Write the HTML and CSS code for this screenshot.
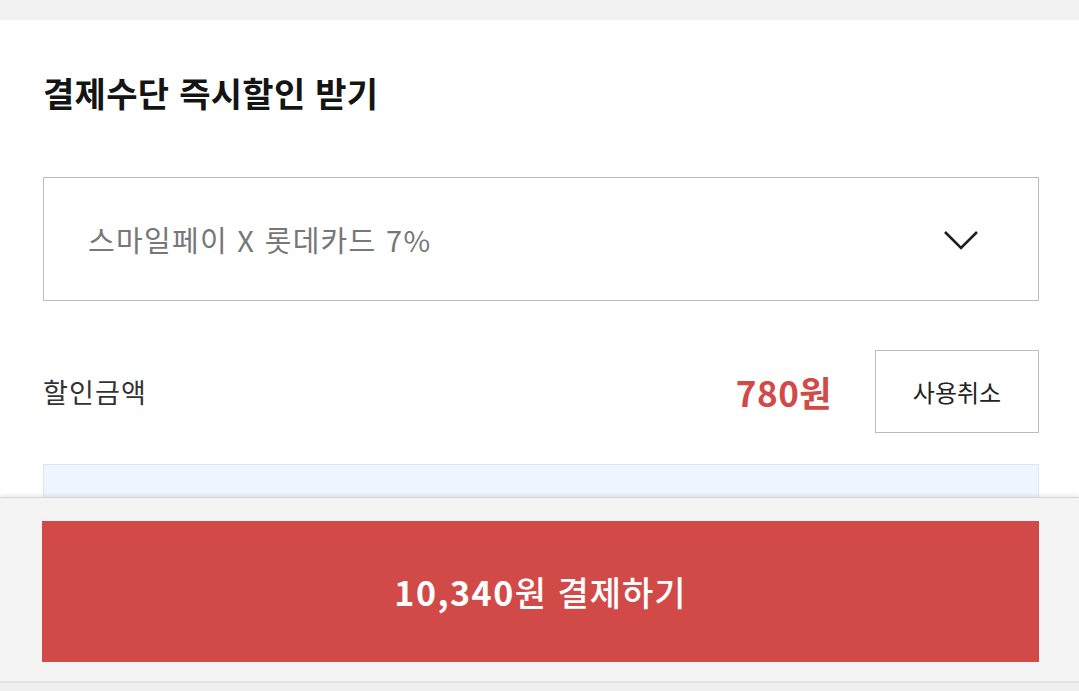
FILE: index.html
```html
<!DOCTYPE html>
<html lang="ko">
<head>
<meta charset="utf-8">
<title>결제수단 즉시할인 받기</title>
<link rel="stylesheet" href="styles.css">
</head>
<body>
<div class="topband"></div>
<main class="section">
  <h1 class="title">결제수단 즉시할인 받기</h1>
  <div class="select">
    <span class="select-text">스마일페이 X 롯데카드 7%</span>
    <svg class="chevron" width="36" height="22" viewBox="0 0 36 22"><polyline points="2,3 18,19 34,3" fill="none" stroke="#1e1e1e" stroke-width="2.6" stroke-linejoin="miter"/></svg>
  </div>
  <div class="row">
    <span class="label">할인금액</span>
    <span class="amount">780원</span>
    <button class="cancel">사용취소</button>
  </div>
  <div class="infobox"></div>
</main>
<footer class="paybar">
  <button class="paybtn"><span class="num">10,340</span>원 결제하기</button>
  <div class="footline"></div>
</footer>
</body>
</html>
```
FILE: styles.css
```css
html, body {
  margin: 0;
  padding: 0;
  background: #ffffff;
  font-family: "Noto Sans CJK KR", "Noto Sans", sans-serif;
  height: 100%;
  overflow: hidden;
}
.topband {
  height: 20px;
  background: #f2f2f2;
}
.section {
  padding: 50px 40px 0 43px;
}
.title {
  margin: 0;
  font-size: 34px;
  line-height: 46px;
  font-weight: 700;
  color: #141414;
  letter-spacing: 0.3px;
}
.select {
  margin-top: 61px;
  height: 124px;
  box-sizing: border-box;
  border: 1px solid #bcbcbc;
  display: flex;
  align-items: center;
  justify-content: space-between;
  padding: 0 59px 0 44px;
}
.select-text {
  font-size: 29px;
  color: #777777;
  letter-spacing: 1.3px;
}
.chevron {
  display: block;
  margin-top: 2px;
}
.row {
  margin-top: 49px;
  display: flex;
  align-items: center;
  height: 83px;
}
.label {
  font-size: 27px;
  color: #333333;
  flex: 1;
  letter-spacing: 1.2px;
}
.amount {
  font-size: 35px;
  font-weight: 700;
  color: #d24a48;
  margin-right: 43px;
  letter-spacing: 0.5px;
}
.cancel {
  width: 164px;
  height: 83px;
  box-sizing: border-box;
  border: 1px solid #bcbcbc;
  background: #ffffff;
  font-family: inherit;
  font-size: 24px;
  color: #222222;
  padding: 0;
}
.infobox {
  margin-top: 31px;
  height: 200px;
  background: #eef5fd;
  border: 1px solid #dde6ef;
  box-sizing: border-box;
}
.paybar {
  position: fixed;
  left: 0;
  right: 0;
  bottom: 0;
  height: 194px;
  box-sizing: border-box;
  background: #f4f4f4;
  border-top: 1px solid #d6d6d6;
  box-shadow: 0 -2px 4px rgba(0, 0, 0, 0.08);
  padding-top: 23px;
  display: flex;
  flex-direction: column;
}
.paybtn {
  margin: 0 40px 0 42px;
  height: 141px;
  border: none;
  background: #d24a48;
  color: #ffffff;
  font-family: inherit;
  font-size: 34px;
  font-weight: 500;
  letter-spacing: 1px;
  padding: 0;
}
.paybtn .num {
  font-weight: 700;
  letter-spacing: 1.5px;
}
.footline {
  margin-top: 19px;
  flex: 1;
  border-top: 2px solid #e3e3e3;
  background: #f0efef;
}
```
